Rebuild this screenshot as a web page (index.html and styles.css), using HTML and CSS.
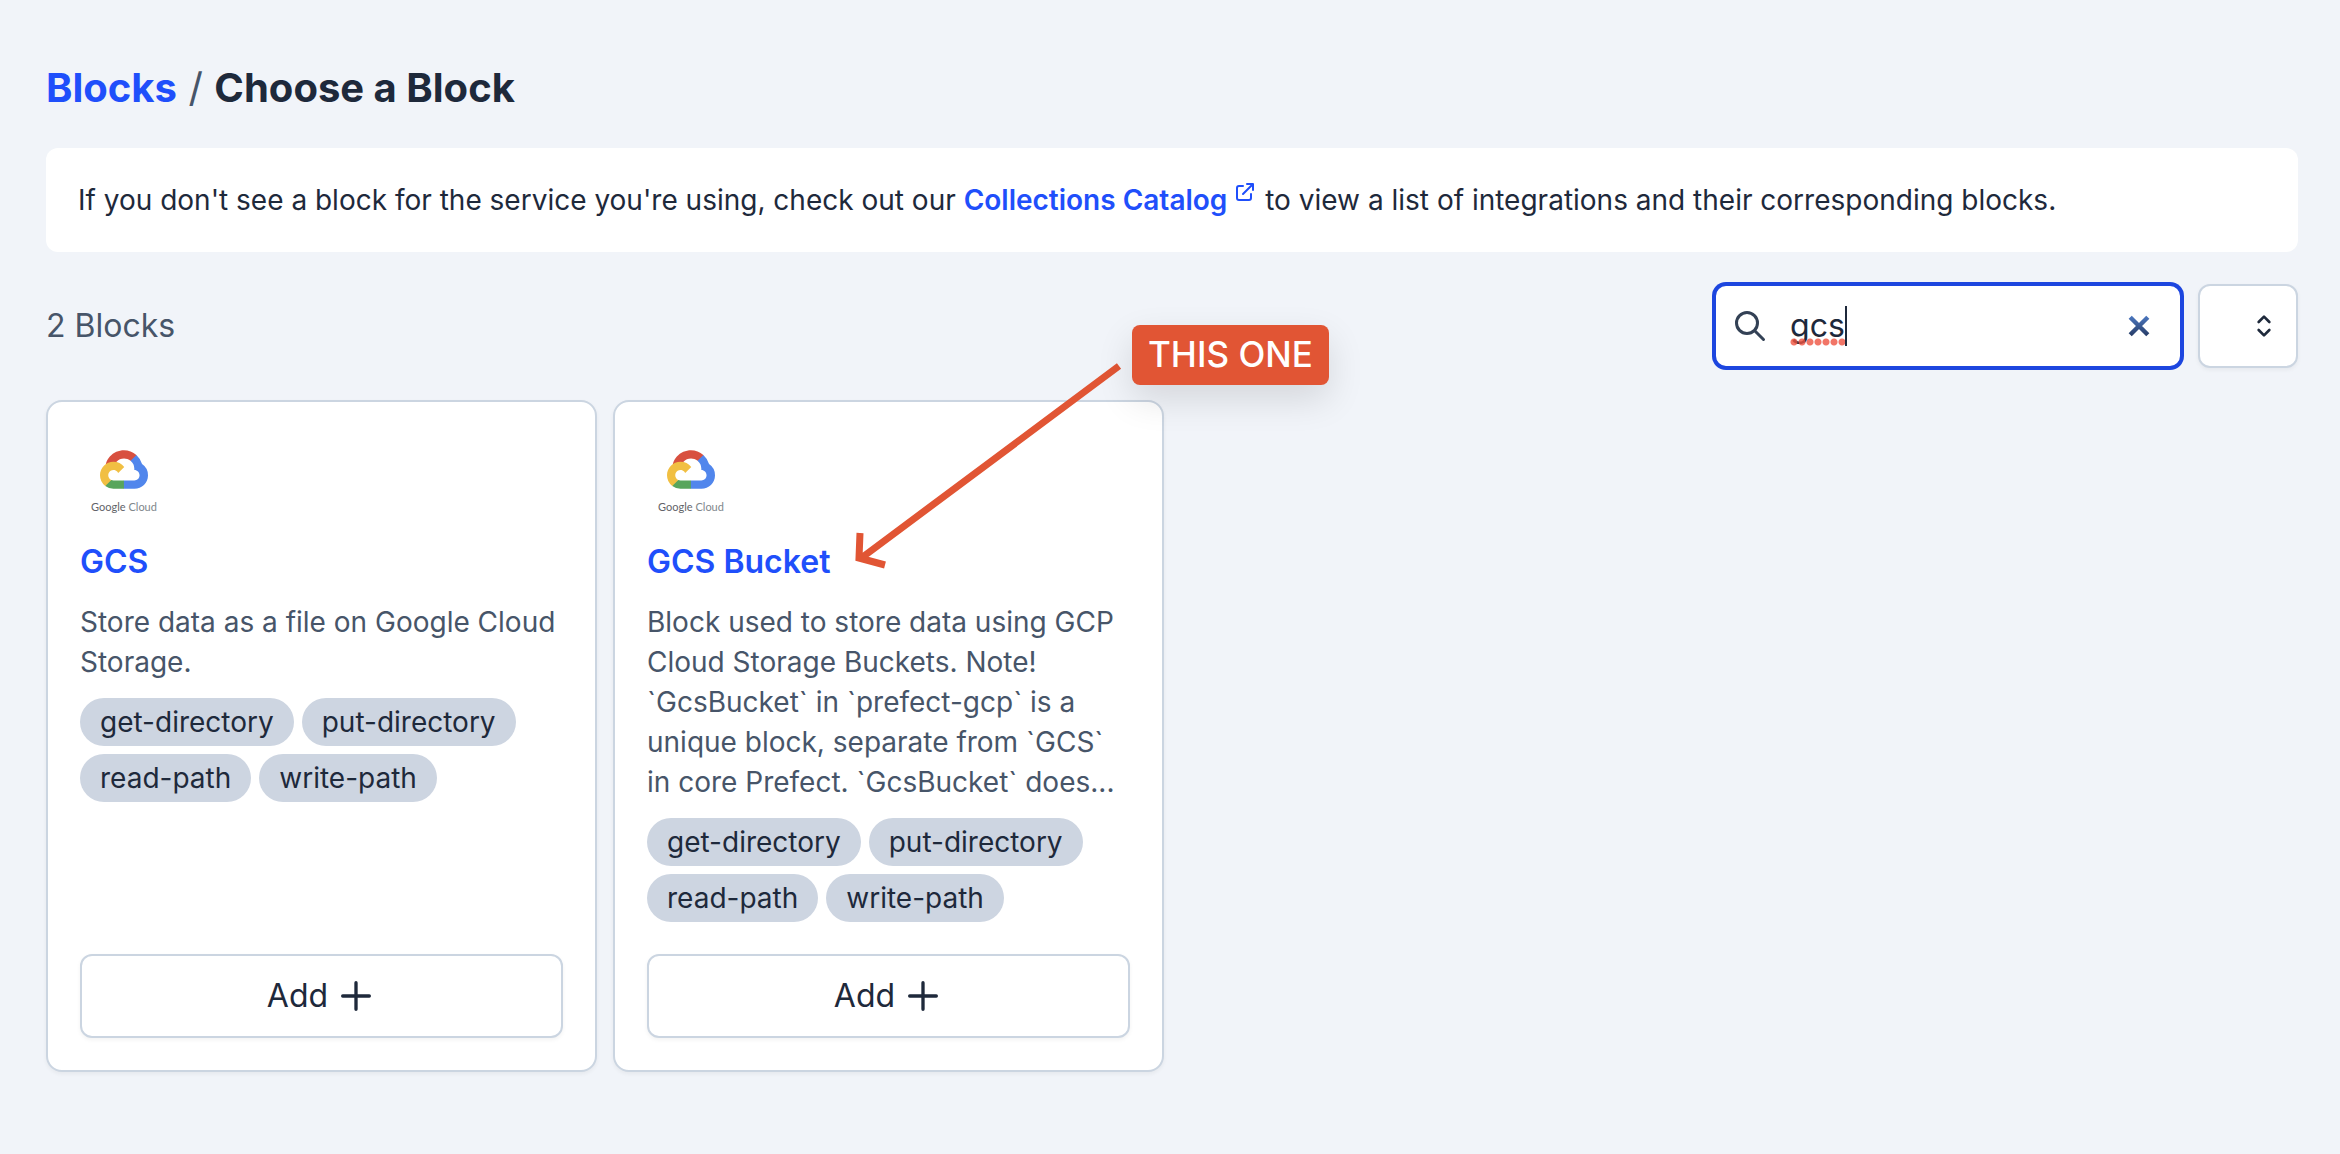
FILE: index.html
```html
<!DOCTYPE html>
<html lang="en">
<head>
  <meta charset="utf-8">
  <meta name="viewport" content="width=device-width, initial-scale=1">
  <title>Blocks / Choose a Block</title>
  <link rel="stylesheet" href="styles.css">
</head>
<body>
  <svg class="sprite" aria-hidden="true">
    <symbol id="plus" viewBox="0 0 24 24"><path d="M12 4v16m8-8H4"/></symbol>
    <symbol id="cloud" viewBox="0 0 256 206">
      <path fill="#d8503f" d="M170.252 56.819l22.253-22.253 1.483-9.37C153.437-11.677 88.976-7.496 52.42 33.92 42.267 45.423 34.734 59.764 30.717 74.573l7.97-1.123 44.505-7.34 3.436-3.513c19.797-21.742 53.27-24.667 76.128-6.168l7.496.39z"/>
      <path fill="#5186ec" d="M224.205 73.918a100.249 100.249 0 0 0-30.217-48.722l-31.232 31.232a55.515 55.515 0 0 1 20.379 44.037v5.544c15.35 0 27.797 12.445 27.797 27.796 0 15.352-12.446 27.485-27.797 27.485h-55.671l-5.466 5.934v33.34l5.466 5.231h55.67c39.93.311 72.553-31.494 72.864-71.424a72.303 72.303 0 0 0-31.793-60.453"/>
      <path fill="#58a55c" d="M71.87 205.796h55.593V161.29H71.87a27.275 27.275 0 0 1-11.498-2.498l-7.887 2.42-22.409 22.253-1.952 7.574a71.985 71.985 0 0 0 43.746 14.757"/>
      <path fill="#f1bf42" d="M71.87 61.425C31.94 61.664-.237 94.228.001 134.158a72.301 72.301 0 0 0 28.123 56.88l32.248-32.246c-13.99-6.322-20.208-22.786-13.887-36.776 6.32-13.99 22.786-20.208 36.775-13.888a27.796 27.796 0 0 1 13.887 13.888l32.248-32.248A72.224 72.224 0 0 0 71.87 61.425"/>
    </symbol>
  </svg>

  <main class="page">
    <h1 class="heading"><a href="#blocks">Blocks</a> <span class="heading-slash">/</span> Choose a Block</h1>

    <p class="banner">If you don't see a block for the service you're using, check out our
      <a class="banner-link" href="#catalog">Collections Catalog<svg class="external" viewBox="0 0 24 24" aria-hidden="true"><path d="M10 6H6a2 2 0 00-2 2v10a2 2 0 002 2h10a2 2 0 002-2v-4M14 4h6m0 0v6m0-6L10 14"/></svg></a>
      to view a list of integrations and their corresponding blocks.</p>

    <div class="toolbar">
      <p class="count">2 Blocks</p>
      <div class="search">
        <svg class="search-icon" viewBox="0 0 24 24" aria-hidden="true"><path d="M21 21l-6-6m2-5a7 7 0 11-14 0 7 7 0 0114 0z"/></svg>
        <div class="search-field">
          <input class="search-input" type="text" value="gcs" aria-label="Search blocks">
          <span class="spelling" aria-hidden="true"></span>
        </div>
        <button class="clear" type="button" aria-label="Clear search">
          <svg viewBox="0 0 20 20" aria-hidden="true">
            <defs><linearGradient id="clear-fill" gradientUnits="userSpaceOnUse" x1="0" y1="0" x2="0" y2="20"><stop offset="0" stop-color="#4d7ac4"/><stop offset="1" stop-color="#253962"/></linearGradient></defs>
            <path stroke="url(#clear-fill)" d="M2 2l16 16M18 2L2 18"/>
          </svg>
        </button>
      </div>
      <div class="filter">
        <select class="filter-select" aria-label="Capability"><option value=""></option></select>
        <svg class="filter-icon" viewBox="0 0 24 24" aria-hidden="true"><path d="M8 9l4-4 4 4m0 6l-4 4-4-4"/></svg>
      </div>
    </div>

    <div class="cards">
      <article class="card">
        <div class="logo"><svg class="logo-cloud" aria-hidden="true"><use href="#cloud"/></svg><span class="logo-name">Google <span class="logo-light">Cloud</span></span></div>
        <h2 class="title"><a href="#gcs">GCS</a></h2>
        <p class="description">Store data as a file on Google Cloud Storage.</p>
        <ul class="tags"><li>get-directory</li><li>put-directory</li><li>read-path</li><li>write-path</li></ul>
        <button class="add" type="button">Add <svg class="add-icon" aria-hidden="true"><use href="#plus"/></svg></button>
      </article>

      <article class="card">
        <div class="logo"><svg class="logo-cloud" aria-hidden="true"><use href="#cloud"/></svg><span class="logo-name">Google <span class="logo-light">Cloud</span></span></div>
        <h2 class="title"><a href="#gcs-bucket">GCS Bucket</a></h2>
        <p class="description">Block used to store data using GCP Cloud Storage Buckets. Note! `GcsBucket` in `prefect-gcp` is a unique block, separate from `GCS` in core Prefect. `GcsBucket` does...</p>
        <ul class="tags"><li>get-directory</li><li>put-directory</li><li>read-path</li><li>write-path</li></ul>
        <button class="add" type="button">Add <svg class="add-icon" aria-hidden="true"><use href="#plus"/></svg></button>
        <div class="callout">
          <svg class="arrow" viewBox="0 0 277 250" aria-hidden="true"><path d="M264 41L5 234M5 208L4 233L30 240"/></svg>
          <span class="callout-label">THIS ONE</span>
        </div>
      </article>
    </div>
  </main>
</body>
</html>
```

FILE: styles.css
```css
:root {
  --ink: #1e293b;
  --muted: #475569;
  --line: #cbd5e1;
  --link: #1f4ffb;
  --focus: #1d46df;
  --accent: #e15534;
}

* { box-sizing: border-box; }

body {
  margin: 0;
  background: #f1f4f9;
  color: var(--ink);
  font-family: Inter, "Liberation Sans", sans-serif;
  font-size: 28px;
  line-height: 40px;
}

h1, h2, p, ul { margin: 0; padding: 0; }
a { color: var(--link); text-decoration: none; }
button, input, select { font: inherit; color: inherit; }

svg { fill: none; stroke: currentColor; stroke-width: 2; stroke-linecap: round; stroke-linejoin: round; }
.sprite { position: absolute; width: 0; height: 0; }

.page {
  display: flex;
  flex-direction: column;
  gap: 32px;
  padding: 60px 42px 82px 46px;
}

.heading { font-size: 40px; line-height: 56px; font-weight: 700; }
.heading-slash { margin: 0 2px; color: var(--muted); font-weight: 400; }

.banner { padding: 32px; border-radius: 12px; background: #fff; }
.banner-link { font-weight: 600; }
.external { width: 24px; height: 24px; margin: -12px 0 -12px 6px; vertical-align: 18px; }

.toolbar { display: flex; align-items: center; gap: 16px; font-size: 32px; line-height: 48px; }
.count { margin-right: auto; color: var(--muted); }

.search {
  display: flex;
  align-items: center;
  gap: 22px;
  width: 468px;
  height: 84px;
  padding: 0 30px 0 16px;
  border: 2px solid var(--focus);
  border-radius: 12px;
  background: #fff;
  box-shadow: 0 0 0 2px var(--focus);
}
.search-icon { flex: none; width: 36px; height: 36px; color: #334155; }
.search-field { position: relative; flex: 1; display: flex; }
.search-input { width: 100%; height: 48px; padding: 0; border: 0; background: none; outline: none; }
/* Spelling dots under the typed word, with the caret at its end */
.spelling {
  position: absolute;
  left: 0;
  top: 4px;
  width: 57px;
  height: 40px;
  border-right: 2px solid var(--ink);
  background: radial-gradient(circle, rgba(238, 83, 65, .8) 3px, transparent 4px) left bottom / 8px 8px repeat-x;
}
.clear { flex: none; display: flex; padding: 0; border: 0; background: none; }
.clear svg { width: 22px; height: 22px; stroke-width: 4; stroke-linecap: butt; }

.filter { position: relative; width: 100px; }
.filter-select {
  display: block;
  width: 100%;
  height: 84px;
  border: 2px solid var(--line);
  border-radius: 12px;
  background: #fff;
  appearance: none;
  box-shadow: 0 2px 4px rgba(0, 0, 0, .05);
}
.filter-icon { position: absolute; right: 18px; top: 26px; width: 32px; height: 32px; pointer-events: none; }

.cards { display: grid; grid-template-columns: repeat(4, 1fr); gap: 16px; }
.card {
  position: relative;
  display: flex;
  flex-direction: column;
  padding: 32px;
  border: 2px solid var(--line);
  border-radius: 16px;
  background: #fff;
  box-shadow: 0 2px 4px rgba(0, 0, 0, .05);
}
.logo { display: flex; flex-direction: column; align-items: center; gap: 10px; width: 88px; height: 96px; padding-top: 16px; margin-bottom: 8px; }
.logo-cloud { flex: none; width: 48px; height: 39px; stroke: none; }
.logo-name { color: #5f6368; font-family: Lato, sans-serif; font-size: 11px; line-height: 16px; white-space: nowrap; }
.logo-light { color: #80868b; }
.title { margin-bottom: 16px; font-size: 32px; line-height: 48px; font-weight: 600; }
.description { color: var(--muted); }
.tags { display: flex; flex-wrap: wrap; gap: 8px; margin: 16px 0 32px; list-style: none; }
.tags li { padding: 4px 20px; border-radius: 24px; background: #cdd5e1; }
.add {
  display: flex;
  align-items: center;
  justify-content: center;
  gap: 8px;
  height: 84px;
  margin-top: auto;
  padding: 0 32px;
  border: 2px solid var(--line);
  border-radius: 12px;
  background: #fff;
  font-size: 32px;
  line-height: 48px;
  box-shadow: 0 2px 4px rgba(0, 0, 0, .05);
}
.add-icon { width: 40px; height: 40px; }

/* Annotation pinned over the card, pointing at its title */
.callout { position: absolute; z-index: 1; left: 240px; top: -77px; display: flex; align-items: flex-start; color: var(--accent); pointer-events: none; }
.arrow { flex: none; width: 277px; height: 250px; stroke-width: 7; stroke-linecap: butt; stroke-linejoin: miter; }
.callout-label {
  padding: 5px 16px 7px;
  border-radius: 8px;
  background: var(--accent);
  color: #fff;
  font-size: 35px;
  line-height: 48px;
  font-weight: 500;
  white-space: nowrap;
  box-shadow: 0 14px 36px rgba(0, 0, 0, .12);
}
```
